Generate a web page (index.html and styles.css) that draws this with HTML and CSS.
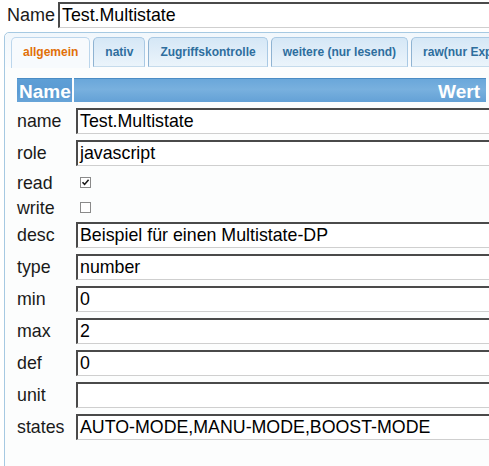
FILE: index.html
```html
<!DOCTYPE html>
<html>
<head>
<meta charset="utf-8">
<link rel="stylesheet" href="styles.css">
</head>
<body>
<div class="top">
  <span class="top-label">Name</span>
  <div class="field top-field">Test.Multistate</div>
</div>
<div class="widget">
  <div class="nav">
    <div class="tab active">allgemein</div>
    <div class="tab">nativ</div>
    <div class="tab">Zugriffskontrolle</div>
    <div class="tab">weitere (nur lesend)</div>
    <div class="tab">raw(nur Experten)</div>
  </div>
  <div class="panel">
    <div class="grid">
      <div class="head head-name">Name</div>
      <div class="head head-value">Wert</div>

      <div class="lbl">name</div>
      <div class="val"><div class="field">Test.Multistate</div></div>

      <div class="lbl">role</div>
      <div class="val"><div class="field">javascript</div></div>

      <div class="lbl short">read</div>
      <div class="val short"><span class="cb"><svg width="9" height="9" viewBox="0 0 9 9"><path d="M1.5 4.2 L3.6 6.4 L7.6 1.8" fill="none" stroke="#1a1a1a" stroke-width="1.6"/></svg></span></div>

      <div class="lbl short">write</div>
      <div class="val short"><span class="cb"></span></div>

      <div class="lbl">desc</div>
      <div class="val"><div class="field">Beispiel für einen Multistate-DP</div></div>

      <div class="lbl">type</div>
      <div class="val"><div class="field">number</div></div>

      <div class="lbl">min</div>
      <div class="val"><div class="field">0</div></div>

      <div class="lbl">max</div>
      <div class="val"><div class="field">2</div></div>

      <div class="lbl">def</div>
      <div class="val"><div class="field">0</div></div>

      <div class="lbl">unit</div>
      <div class="val"><div class="field"></div></div>

      <div class="lbl">states</div>
      <div class="val"><div class="field">AUTO-MODE,MANU-MODE,BOOST-MODE</div></div>
    </div>
  </div>
</div>
</body>
</html>
```
FILE: styles.css
```css
html, body {
  margin: 0;
  padding: 0;
  background: #ffffff;
  overflow: hidden;
  font-family: "Liberation Sans", Arial, sans-serif;
  color: #1a1a1a;
}

.top {
  display: flex;
  align-items: flex-start;
  padding: 2px 0 0 7px;
  height: 26px;
}

.top-label {
  flex: none;
  font-size: 18px;
  line-height: 26px;
  width: 51px;
}

.field {
  box-sizing: border-box;
  height: 26px;
  width: 460px;
  background: #ffffff;
  border-top: 2px solid #4a4a4a;
  border-left: 2px solid #4a4a4a;
  border-bottom: 1px solid #cfcfcf;
  border-right: 1px solid #cfcfcf;
  padding: 0 2px;
  font-size: 17.8px;
  line-height: 23px;
  white-space: nowrap;
  overflow: hidden;
  color: #000;
}

.top-field {
  width: 460px;
  flex: none;
}

.widget {
  margin: 4px 0 0 4px;
  width: 620px;
  min-height: 440px;
  border: 1px solid #a6c9e2;
  border-radius: 5px 5px 0 0;
  background: #fcfdfd;
}

.nav {
  display: flex;
  gap: 3px;
  padding: 4px 0 0 6px;
  height: 30px;
  background: linear-gradient(#f1f7fc, #fafcfe);
  border-radius: 5px 5px 0 0;
}

.tab {
  box-sizing: border-box;
  height: 30px;
  padding: 0 11px;
  font-size: 12px;
  font-weight: bold;
  line-height: 29px;
  color: #2e6e9e;
  white-space: nowrap;
  background: linear-gradient(#d5e7f6, #ebf4fb);
  border: 1px solid #a9c9e4;
  border-left-color: #8fb3d2;
  border-bottom-color: #c5dbec;
  border-radius: 5px 5px 0 0;
}

.tab.active {
  color: #e17009;
  background: #f7fafd;
  border-color: #bcd6ec;
  border-bottom: none;
  height: 31px;
}

.panel {
  padding: 11px 0 0 12px;
}

.grid {
  display: grid;
  grid-template-columns: 55px 412px;
  column-gap: 2px;
  row-gap: 2px;
}

.head {
  box-sizing: border-box;
  height: 24px;
  color: #ffffff;
  font-size: 19px;
  font-weight: bold;
  line-height: 26px;
  border-top: 1px solid #4b8cc4;
  overflow: hidden;
}

.head-name {
  padding-left: 2px;
  background: linear-gradient(#5e9fd6, #5a9ad2 55%, #67a4d8);
}

.head-value {
  text-align: right;
  padding-right: 6px;
  background: linear-gradient(#6aa7da, #78b0de 45%, #64a1d6);
}

.lbl {
  padding-top: 4px;
  height: 26px;
  font-size: 17.8px;
  line-height: 26px;
  color: #1a1a1a;
  white-space: nowrap;
}

.val {
  padding: 4px 0 0 2px;
  height: 26px;
}

.lbl.short {
  height: 21px;
  padding-top: 2px;
}

.val.short {
  height: 14px;
  padding-top: 9px;
  padding-left: 6px;
}

.cb {
  display: block;
  box-sizing: border-box;
  width: 11px;
  height: 11px;
  border: 1px solid #8a8a8a;
  background: #ffffff;
}

.cb svg {
  display: block;
}
```
